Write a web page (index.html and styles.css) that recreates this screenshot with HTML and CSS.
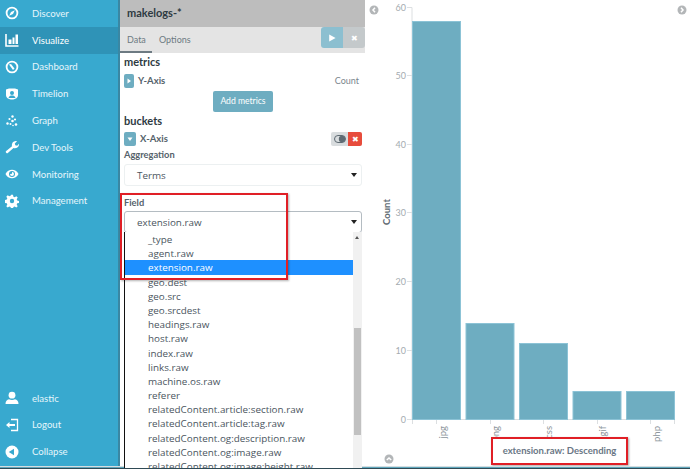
FILE: index.html
```html
<!DOCTYPE html>
<html lang="en">
<head>
<meta charset="utf-8">
<title>Visualize</title>
<link rel="stylesheet" href="styles.css">
</head>
<body>
<div class="app">
  <nav class="nav">
    <ul class="nav-list">
      <li class="nav-item"><svg class="ico" viewBox="0 0 14 14"><circle cx="7" cy="7" r="5.400" fill="none" stroke="#fff" stroke-width="1.800"/><path d="M9.800 4.200 8 8 4.200 9.800 6 6z" fill="#fff"/></svg>Discover</li>
      <li class="nav-item active"><svg class="ico" viewBox="0 0 14 14"><path d="M1 1v12h12.500" fill="none" stroke="#fff" stroke-width="1.600"/><path d="M3.500 6.500h3V11h-3zM7.500 4.500h2V11h-2zM10.500 1.500h2.500V11h-2.500z" fill="#fff"/></svg>Visualize</li>
      <li class="nav-item"><svg class="ico" viewBox="0 0 14 14"><circle cx="7" cy="7" r="5.400" fill="none" stroke="#fff" stroke-width="1.800"/><path d="M4 4.500 6 4l3.500 4.500-1.500 1.500z" fill="#fff"/></svg>Dashboard</li>
      <li class="nav-item"><svg class="ico" viewBox="0 0 14 14"><path d="M1 2.500 4 1.500h6l3 1v5.500c0 3-3 4.500-6 4.500s-6-1.500-6-4.500z" fill="#fff"/><circle cx="7" cy="6" r="2" fill="#38a9cf"/><path d="M3.500 11c.5-2 2-2.500 3.500-2.500s3 .5 3.500 2.500z" fill="#38a9cf"/></svg>Timelion</li>
      <li class="nav-item"><svg class="ico" viewBox="0 0 14 14" fill="#fff"><circle cx="7.500" cy="2.500" r="1.200"/><circle cx="4.500" cy="5" r="1.100"/><circle cx="10" cy="5.500" r="1.100"/><circle cx="7.500" cy="7" r="1.300"/><circle cx="2.500" cy="9.500" r="1.200"/><circle cx="5.500" cy="10" r="1"/><circle cx="11" cy="10.500" r="1.300"/><circle cx="8" cy="11.500" r=".8"/></svg>Graph</li>
      <li class="nav-item"><svg class="ico" viewBox="0 0 14 14"><path d="M1.200 12.800a1.300 1.300 0 0 1 0-1.900L7 6.200C6.400 4 7.600 1.200 10.700 1c.6 0 1 .1 1.300.2L9.800 3.400l.5 1.900 1.900.5L14 3.800c.3 3-2.500 5-5.500 4.200L3.100 12.800a1.300 1.300 0 0 1-1.900 0z" fill="#fff"/></svg>Dev Tools</li>
      <li class="nav-item"><svg class="ico" viewBox="0 0 14 14"><path d="M.5 7C2 4 4.400 2.700 7 2.700S12 4 13.500 7C12 10 9.600 11.300 7 11.300S2 10 .5 7z" fill="#fff"/><circle cx="7" cy="7" r="3" fill="#38a9cf"/><path d="M7 5a2 2 0 1 1-2 2l2-.2z" fill="#fff"/></svg>Monitoring</li>
      <li class="nav-item"><svg class="ico" viewBox="0 0 14 14"><path d="M6 .8h2l.4 1.900 1.300.5 1.600-1 1.400 1.400-1 1.600.5 1.300 1.900.4v2l-1.900.4-.5 1.300 1 1.600-1.400 1.400-1.600-1-1.300.5-.4 1.900H6l-.4-1.900-1.300-.5-1.600 1-1.400-1.400 1-1.600-.5-1.300-1.900-.4V6l1.900-.4.500-1.300-1-1.600 1.400-1.400 1.600 1 1.300-.5z" fill="#fff"/><circle cx="7" cy="7" r="2.200" fill="#38a9cf"/></svg>Management</li>
    </ul>
    <ul class="nav-list">
      <li class="nav-item"><svg class="ico" viewBox="0 0 14 14"><circle cx="7" cy="4.200" r="3.400" fill="#fff"/><path d="M.5 13c0-3 1.500-4.500 3.500-4.800 1.800 1 4.200 1 6 0 2 .3 3.500 1.800 3.500 4.800z" fill="#fff"/></svg>elastic</li>
      <li class="nav-item"><svg class="ico" viewBox="0 0 14 14"><path d="M6 1.500h6.500v11H6" fill="none" stroke="#fff" stroke-width="1.300"/><path d="M1 7l3.500-3v2h5.500v2H4.500v2z" fill="#fff"/></svg>Logout</li>
      <li class="nav-item"><svg class="ico" viewBox="0 0 14 14"><circle cx="7" cy="7" r="6.500" fill="#fff"/><path d="M3.800 7 9 3.800v6.400z" fill="#38a9cf"/></svg>Collapse</li>
    </ul>
  </nav>

  <section class="editor">
    <header class="title">makelogs-*</header>
    <div class="tabs">
      <span class="tab tab-on">Data</span>
      <span class="tab">Options</span>
      <div class="run-group">
        <span class="run"><svg class="run-ico" viewBox="0 0 10 10"><path d="M1.500.5 9.500 5l-8 4.500z" fill="#fff"/></svg></span>
        <span class="discard">&#x2716;</span>
      </div>
    </div>
    <div class="form">
      <h2 class="section">metrics</h2>
      <div class="agg-row">
        <span class="caret"><svg class="caret-ico" viewBox="0 0 6 6"><path d="M1.500.5 5 3 1.500 5.500z" fill="#fff"/></svg></span>
        <span class="agg-name">Y-Axis</span>
        <span class="agg-value">Count</span>
      </div>
      <div class="add-wrap"><span class="add">Add metrics</span></div>
      <h2 class="section buckets">buckets</h2>
      <div class="agg-row">
        <span class="caret caret-wide"><svg class="caret-ico" viewBox="0 0 6 6"><path d="M.5 1.500h5L3 5z" fill="#fff"/></svg></span>
        <span class="agg-name">X-Axis</span>
        <span class="agg-actions">
          <span class="toggle"><svg class="toggle-ico" viewBox="0 0 12 8"><rect x=".5" y=".5" width="11" height="7" rx="3.500" fill="none" stroke="#5f6b73"/><circle cx="8" cy="4" r="3.200" fill="#5f6b73"/></svg></span>
          <span class="remove">&#x2716;</span>
        </span>
      </div>
      <label class="lbl">Aggregation</label>
      <div class="select">Terms<i class="arrow"></i></div>
      <label class="lbl lbl-field">Field</label>
      <div class="select select-open">extension.raw<i class="arrow"></i></div>
      <div class="listbox">
        <ul class="options">
          <li>_type</li>
          <li>agent.raw</li>
          <li class="picked">extension.raw</li>
          <li>geo.dest</li>
          <li>geo.src</li>
          <li>geo.srcdest</li>
          <li>headings.raw</li>
          <li>host.raw</li>
          <li>index.raw</li>
          <li>links.raw</li>
          <li>machine.os.raw</li>
          <li>referer</li>
          <li>relatedContent.article:section.raw</li>
          <li>relatedContent.article:tag.raw</li>
          <li>relatedContent.og:description.raw</li>
          <li>relatedContent.og:image.raw</li>
          <li>relatedContent.og:image:height.raw</li>
        </ul>
        <div class="scrollbar"><span class="sb-up"></span><span class="sb-thumb"></span></div>
      </div>
    </div>
  </section>

  <main class="chart">
    <svg class="plot" viewBox="0 0 325 469" width="325" height="469">
      <g class="axis-lines">
        <path d="M47 7.500V419.500H309"/>
        <path d="M42 7.500h5M42 75.500h5M42 144.500h5M42 212.500h5M42 281.500h5M42 350.500h5M42 419.500h5"/>
        <path d="M47.500 419v5M71.500 419v5M125.500 419v5M178.500 419v5M232.500 419v5M285.500 419v5M309.500 419v5"/>
      </g>
      <g class="bars">
        <rect x="47.500" y="21.500" width="48" height="398"/>
        <rect x="101" y="323.500" width="48" height="96"/>
        <rect x="154.500" y="343.500" width="48" height="76"/>
        <rect x="208" y="391.500" width="48" height="28"/>
        <rect x="261.500" y="391.500" width="48" height="28"/>
      </g>
      <g class="ticks">
        <text x="41" y="10.500">60</text>
        <text x="41" y="78.500">50</text>
        <text x="41" y="147.500">40</text>
        <text x="41" y="215.500">30</text>
        <text x="41" y="284.500">20</text>
        <text x="41" y="353.500">10</text>
        <text x="41" y="422.500">0</text>
      </g>
      <g class="cats">
        <text transform="translate(81 426) rotate(-90)">jpg</text>
        <text transform="translate(134 426) rotate(-90)">png</text>
        <text transform="translate(187 426) rotate(-90)">css</text>
        <text transform="translate(241 426) rotate(-90)">gif</text>
        <text transform="translate(295 426) rotate(-90)">php</text>
      </g>
      <text class="y-title" transform="translate(25 212) rotate(-90)">Count</text>
      <g class="nav-dot">
        <circle cx="9" cy="10" r="4.500"/><path class="chev" d="M10 7.800 8 10l2 2.200"/>
        <circle cx="317" cy="10" r="4.500"/><path class="chev" d="M316 7.800 318 10l-2 2.200"/>
        <circle cx="24" cy="459" r="4.500"/><path class="chev" d="M21.800 460 24 458l2.200 2"/>
      </g>
    </svg>
    <div class="sort-note">extension.raw: Descending</div>
  </main>

  <div class="callout"></div>
  <div class="page-edge"></div>
</div>
</body>
</html>
```
FILE: styles.css
```css
* { box-sizing: border-box; }
html, body { margin: 0; padding: 0; }
body { font-family: "Lato", "Open Sans", "Liberation Sans", sans-serif; background: #fff; color: #4a5560; }
.app { position: relative; display: flex; width: 690px; height: 469px; overflow: hidden; }

.nav { width: 120px; flex: none; background: #38a9cf; border-right: 2px solid #3a87a3; display: flex; flex-direction: column; justify-content: space-between; padding-bottom: 4px; }
.nav-list { list-style: none; margin: 0; padding: 0; }
.nav-item { height: 26.800px; display: flex; align-items: center; padding-left: 5px; font-size: 9.600px; color: #e6f6fb; }
.nav-item.active { background: #2f93b7; color: #fff; }
.ico { width: 14px; height: 14px; margin-right: 13px; flex: none; }

.editor { width: 245px; flex: none; display: flex; flex-direction: column; }
.title { height: 27px; background: #bdbdbd; padding-left: 7px; font-size: 11px; font-weight: 700; line-height: 26px; color: #2e3a42; }
.tabs { height: 26px; background: #e4e4e4; display: flex; align-items: center; position: relative; }
.tab { font-size: 9px; color: #6d7a82; height: 26px; line-height: 25px; padding: 0 7px; }
.tab-on { width: 32px; border-bottom: 2px solid #6d7a82; }
.run-group { margin-left: auto; display: flex; margin-top: -5px; }
.run, .discard { width: 22px; height: 21px; display: flex; align-items: center; justify-content: center; color: #fff; }
.run { background: #8cbfd0; border-radius: 3px 0 0 3px; }
.discard { background: #c4c9cb; border-radius: 0 3px 3px 0; font-size: 8px; }
.run-ico { width: 8px; height: 8px; }

.form { padding: 2px 3px 0 4px; flex: 1; min-height: 0; }
.section { margin: 0; font-size: 11px; line-height: 13px; font-weight: 700; color: #2e3a42; }
.agg-row { display: flex; align-items: center; height: 15px; margin-top: 5px; font-size: 9.500px; }
.buckets + .agg-row { margin-top: 4px; }
.caret { width: 10px; height: 14px; background: #6eadc1; border-radius: 2px; display: flex; align-items: center; justify-content: center; margin-right: 4px; }
.caret-wide { width: 12px; margin-right: 4px; }
.caret-ico { width: 6px; height: 6px; }
.agg-name { font-weight: 700; color: #55626b; }
.agg-value { margin-left: auto; margin-right: 3px; font-size: 9px; color: #7b868d; }
.add-wrap { display: flex; justify-content: center; margin-top: 3px; }
.add { width: 60px; height: 21px; background: #6eadc1; border-radius: 2px; color: #fff; font-size: 8.600px; line-height: 21px; text-align: center; }
.buckets { margin-top: 2px; }
.agg-actions { margin-left: auto; display: flex; }
.toggle { width: 17px; height: 14px; background: #d8dcde; border-radius: 2px 0 0 2px; display: flex; align-items: center; justify-content: center; }
.toggle-ico { width: 12px; height: 8px; }
.remove { width: 14px; height: 14px; background: #e74c3c; border-radius: 0 2px 2px 0; color: #fff; font-size: 8px; line-height: 14px; text-align: center; }
.lbl { display: block; font-size: 9.300px; font-weight: 700; color: #55626b; line-height: 12px; margin-top: 3px; }
.select { position: relative; height: 22px; margin-top: 3px; border: 1px solid #ecf0f1; border-radius: 3px; font-family: "Open Sans", sans-serif; font-size: 9.850px; line-height: 21px; padding-left: 12px; color: #4a5560; }
.select-open { border-color: #b4bcc2; margin-top: 2px; }
.lbl-field { margin-top: 11px; }
.arrow { position: absolute; right: 4px; top: 8px; width: 0; height: 0; border-left: 3px solid transparent; border-right: 3px solid transparent; border-top: 4px solid #222; }

.listbox { position: relative; z-index: 1; display: flex; height: 236px; margin-top: -1px; border-left: 1px solid #111; background: #fff; overflow: hidden; }
.options { list-style: none; margin: 0; padding: 0; flex: 1; min-width: 0; }
.options li { height: 14.200px; line-height: 14.200px; padding-left: 23px; font-family: "Open Sans", sans-serif; font-size: 9.850px; color: #4a5560; white-space: nowrap; }
.options .picked { background: #1e90ff; color: #fff; }
.scrollbar { width: 9px; flex: none; background: #f1f1f1; position: relative; }
.sb-up { position: absolute; left: 2px; top: 4px; width: 0; height: 0; border-left: 2.500px solid transparent; border-right: 2.500px solid transparent; border-bottom: 3px solid #555; }
.sb-thumb { position: absolute; left: 1px; right: 1px; top: 96px; height: 107px; background: #c1c1c1; }

.chart { width: 325px; flex: none; position: relative; }
.plot { display: block; }
.axis-lines path { fill: none; stroke: #dcdfe1; stroke-width: 1; }
.bars rect { fill: #6eadc1; stroke: #8cc3d6; stroke-width: 1; }
.ticks text { font-family: "Lato", sans-serif; font-size: 9px; fill: #a4abb0; text-anchor: end; }
.cats text { font-family: "Lato", sans-serif; font-size: 9.500px; fill: #8d969c; text-anchor: end; }
.y-title { font-family: "Lato", sans-serif; font-size: 9.500px; font-weight: 700; fill: #5f6b73; text-anchor: middle; }
.nav-dot circle { fill: #b3b6b8; }
.chev { fill: none; stroke: #fff; stroke-width: 1.500; }
.sort-note { position: absolute; left: 126px; top: 437px; width: 137px; height: 28px; background: #fff; border: 2px solid #e01f26; box-shadow: 1px 1px 2px rgba(0,0,0,.35); font-size: 9.500px; font-weight: 700; color: #6a7785; line-height: 24px; text-align: center; }

.callout { position: absolute; z-index: 2; left: 120px; top: 193px; width: 168px; height: 87px; border: 2px solid #e01f26; box-shadow: 1px 1px 2px rgba(0,0,0,.3); pointer-events: none; }
.page-edge { position: absolute; left: 0; right: 0; bottom: 0; height: 3px; background: linear-gradient(#d5dde0 0 1px, #5fa6bc 1px 2px, #2f4a55 2px); }
```
